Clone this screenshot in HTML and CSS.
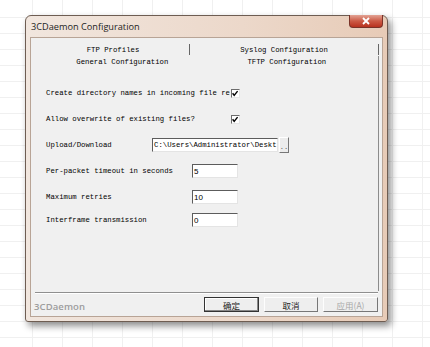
FILE: index.html
```html
<!DOCTYPE html>
<html lang="en">
<head>
  <meta charset="UTF-8">
  <meta name="viewport" content="width=device-width, initial-scale=1.0">
  <title>3CDaemon Configuration</title>
  <link rel="stylesheet" href="styles.css">
</head>
<body>
  <div class="window">
    <div class="titlebar">
      <span class="title">3CDaemon Configuration</span>
      <div class="close-btn">
        <svg width="10" height="8" viewBox="0 0 10 8"><path d="M2 1 L8 7 M8 1 L2 7" stroke="#fff" stroke-width="1.8"/></svg>
      </div>
    </div>

    <div class="client">
      <div class="tab-row tab-row-top">
        <div class="tab tab-left">FTP Profiles</div>
        <div class="tab tab-right">Syslog Configuration</div>
      </div>

      <div class="panel">
        <div class="tab-row tab-row-front">
          <div class="tab tab-left">General Configuration</div>
          <div class="tab tab-right">TFTP Configuration</div>
        </div>

        <div class="form">
          <div class="row">
            <span class="label label-check">Create directory names in incoming file re</span>
            <span class="checkbox"><svg width="9" height="9" viewBox="0 0 9 9"><path d="M1.8 4.2 L3.6 6.6 L7.4 1.8" stroke="#000" stroke-width="1.6" fill="none"/></svg></span>
          </div>
          <div class="row">
            <span class="label label-check">Allow overwrite of existing files?</span>
            <span class="checkbox"><svg width="9" height="9" viewBox="0 0 9 9"><path d="M1.8 4.2 L3.6 6.6 L7.4 1.8" stroke="#000" stroke-width="1.6" fill="none"/></svg></span>
          </div>
          <div class="row">
            <span class="label label-path">Upload/Download</span>
            <span class="field field-path">C:\Users\Administrator\Deskt</span>
            <span class="browse">..</span>
          </div>
          <div class="row">
            <span class="label label-num">Per-packet timeout in seconds</span>
            <span class="field field-num">5</span>
          </div>
          <div class="row">
            <span class="label label-num">Maximum retries</span>
            <span class="field field-num">10</span>
          </div>
          <div class="row row-last">
            <span class="label label-num">Interframe transmission</span>
            <span class="field field-num">0</span>
          </div>
        </div>
      </div>

      <div class="separator"></div>

      <div class="footer">
        <span class="brand">3CDaemon</span>
        <div class="buttons">
          <span class="btn btn-default">确定</span>
          <span class="btn">取消</span>
          <span class="btn btn-disabled">应用(A)</span>
        </div>
      </div>
    </div>
  </div>
</body>
</html>
```

FILE: styles.css
```css
body {
  margin: 0;
  padding: 0;
  width: 430px;
  height: 347px;
  overflow: hidden;
  background-color: #fff;
  background-image:
    repeating-linear-gradient(to bottom, transparent 0, transparent 15px, #f0f0f0 15px, #f0f0f0 16px),
    repeating-linear-gradient(to right, transparent 0, transparent 29px, #f0f0f0 29px, #f0f0f0 30px);
  background-position: 0 2px, 3px 0;
  font-family: "Liberation Mono", monospace;
}
.window {
  box-sizing: border-box;
  margin: 15px 0 0 25px;
  width: 363px;
  height: 307px;
  border: 1px solid #6e5d52;
  border-radius: 6px 6px 3px 3px;
  background: linear-gradient(to right, #f1e6de, #ecd8ca 60%, #e7cbb7);
  box-shadow: 3px 4px 7px rgba(0,0,0,0.45);
  padding: 0 4px 4px 4px;
  display: flex;
  flex-direction: column;
}
.titlebar {
  height: 21px;
  display: flex;
  justify-content: space-between;
  align-items: flex-start;
}
.title {
  font-family: "Open Sans", sans-serif;
  font-size: 9.2px;
  color: #1e1e1e;
  margin: 4px 0 0 1px;
}
.close-btn {
  width: 34px;
  height: 13px;
  margin-top: -1px;
  border: 1px solid #7a3328;
  border-top: none;
  border-radius: 0 0 4px 4px;
  background: linear-gradient(#e2a394, #cc5a45 50%, #b8321f);
  display: flex;
  justify-content: center;
  align-items: center;
  box-sizing: border-box;
}
.client {
  flex: 1;
  background: #f0f0f0;
  border: 1px solid #b8a496;
  box-sizing: border-box;
  display: flex;
  flex-direction: column;
}
.tab-row {
  display: flex;
  height: 12px;
  font-size: 7.3px;
  color: #000;
}
.tab-row-top {
  margin-top: 6px;
  padding-left: 6px;
}
.tab-row-front {
  padding-left: 18px;
}
.tab {
  display: flex;
  align-items: center;
  justify-content: center;
  white-space: nowrap;
}
.tab-left {
  width: 152px;
}
.tab-right {
  width: 189px;
}
.tab-row-top .tab {
  border-right: 1px solid #666;
  height: 11px;
}
.tab-row-top .tab-right {
  width: 188px;
}
.panel {
  flex: 1;
  width: 347px;
  border-right: 1px solid #8c8c8c;
  overflow: hidden;
}
.form {
  padding: 17px 0 0 15px;
  display: flex;
  flex-direction: column;
  gap: 10px;
}
.row {
  display: flex;
  align-items: center;
  height: 16px;
  font-size: 7.3px;
  color: #000;
}
.row-last {
  margin-top: -3px;
}
.label {
  white-space: nowrap;
}
.label-check {
  width: 185px;
}
.label-path {
  width: 106px;
}
.label-num {
  width: 146px;
}
.checkbox {
  width: 9px;
  height: 9px;
  box-sizing: border-box;
  border-top: 1px solid #6c6c6c;
  border-left: 1px solid #6c6c6c;
  border-right: 1px solid #e6e6e6;
  border-bottom: 1px solid #e6e6e6;
  background: #fff;
  display: flex;
}
.checkbox svg {
  margin: -1px 0 0 -1px;
}
.field {
  box-sizing: border-box;
  height: 14px;
  background: #fff;
  border-top: 1px solid #5c5c5c;
  border-left: 1px solid #5c5c5c;
  border-right: 1px solid #e4e4e4;
  border-bottom: 1px solid #e4e4e4;
  display: flex;
  align-items: center;
  padding-left: 1px;
  white-space: nowrap;
  overflow: hidden;
}
.field-path {
  width: 126px;
  font-size: 7.3px;
}
.field-num {
  width: 46px;
  font-family: "Liberation Sans", sans-serif;
  font-size: 8px;
}
.browse {
  box-sizing: border-box;
  width: 10px;
  height: 16px;
  margin-left: 1px;
  border-top: 1px solid #fff;
  border-left: 1px solid #fff;
  border-right: 1px solid #777;
  border-bottom: 1px solid #777;
  background: #ececec;
  font-size: 7px;
  color: #555;
  display: flex;
  align-items: flex-end;
  justify-content: center;
  line-height: 10px;
}
.separator {
  height: 1px;
  background: #8f8f8f;
  margin: 1px 4px 0 4px;
  border-bottom: 1px solid #fff;
}
.footer {
  height: 22px;
  display: flex;
  align-items: flex-start;
  padding: 0 4px 0 3px;
}
.brand {
  font-family: "Open Sans", sans-serif;
  font-weight: 600;
  font-size: 9.5px;
  color: #9d9d9d;
  margin-top: 6px;
  letter-spacing: 0.1px;
}
.buttons {
  margin-left: auto;
  margin-top: 3px;
  display: flex;
  gap: 5px;
}
.btn {
  box-sizing: border-box;
  width: 54px;
  height: 15px;
  border-top: 1px solid #fdfdfd;
  border-left: 1px solid #fdfdfd;
  border-right: 1px solid #777;
  border-bottom: 1px solid #777;
  background: #eeeeee;
  font-family: "Noto Sans CJK SC", sans-serif;
  font-size: 8.5px;
  color: #222;
  display: flex;
  align-items: center;
  justify-content: center;
}
.btn-default {
  width: 55px;
  border: 1px solid #333;
  box-shadow: inset -1px -1px 0 #888, inset 1px 1px 0 #fff;
}
.btn-disabled {
  width: 55px;
  color: #a8a8a8;
}
```
